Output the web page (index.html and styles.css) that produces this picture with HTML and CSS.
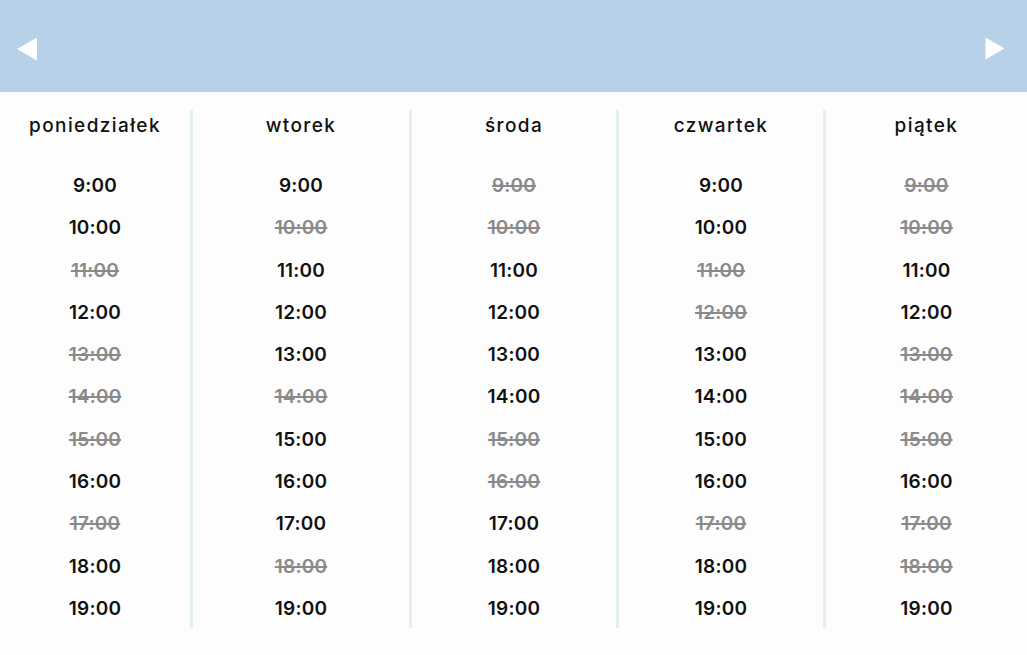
FILE: index.html
```html
<!DOCTYPE html>
<html lang="pl">
<head>
<meta charset="utf-8">
<link rel="stylesheet" href="styles.css">
</head>
<body>
<header class="bar">
  <button class="arrow" aria-label="poprzedni"><svg width="21" height="24" viewBox="0 0 21 24"><polygon points="0,12 20,0.5 20,23.5" fill="#fff"/></svg></button>
  <button class="arrow" aria-label="następny"><svg width="20" height="24" viewBox="0 0 20 24"><polygon points="0.5,0.5 19.5,11.5 0.5,22.5" fill="#fff"/></svg></button>
</header>
<main class="week">
  <section class="day">
    <h2 class="title">poniedziałek</h2>
    <ul class="slots">
      <li>9:00</li><li>10:00</li><li class="off">11:00</li><li>12:00</li><li class="off">13:00</li><li class="off">14:00</li><li class="off">15:00</li><li>16:00</li><li class="off">17:00</li><li>18:00</li><li>19:00</li>
    </ul>
  </section>
  <section class="day">
    <h2 class="title">wtorek</h2>
    <ul class="slots">
      <li>9:00</li><li class="off">10:00</li><li>11:00</li><li>12:00</li><li>13:00</li><li class="off">14:00</li><li>15:00</li><li>16:00</li><li>17:00</li><li class="off">18:00</li><li>19:00</li>
    </ul>
  </section>
  <section class="day">
    <h2 class="title">środa</h2>
    <ul class="slots">
      <li class="off">9:00</li><li class="off">10:00</li><li>11:00</li><li>12:00</li><li>13:00</li><li>14:00</li><li class="off">15:00</li><li class="off">16:00</li><li>17:00</li><li>18:00</li><li>19:00</li>
    </ul>
  </section>
  <section class="day">
    <h2 class="title">czwartek</h2>
    <ul class="slots">
      <li>9:00</li><li>10:00</li><li class="off">11:00</li><li class="off">12:00</li><li>13:00</li><li>14:00</li><li>15:00</li><li>16:00</li><li class="off">17:00</li><li>18:00</li><li>19:00</li>
    </ul>
  </section>
  <section class="day">
    <h2 class="title">piątek</h2>
    <ul class="slots">
      <li class="off">9:00</li><li class="off">10:00</li><li>11:00</li><li>12:00</li><li class="off">13:00</li><li class="off">14:00</li><li class="off">15:00</li><li>16:00</li><li class="off">17:00</li><li class="off">18:00</li><li>19:00</li>
    </ul>
  </section>
</main>
</body>
</html>
```
FILE: styles.css
```css
* { box-sizing: border-box; }
html, body {
  margin: 0;
  padding: 0;
  background: #fdfdfd;
  font-family: Inter, "Noto Sans", sans-serif;
  color: #111;
}
.bar {
  height: 92px;
  background: #b6d1e8;
  display: flex;
  justify-content: space-between;
  align-items: center;
  padding: 6px 22px 0 17px;
}
.arrow {
  border: 0;
  background: none;
  padding: 0;
  margin: 0;
  display: block;
  line-height: 0;
}
.week {
  display: grid;
  grid-template-columns: 190px 219px 207px 207px 204px;
  margin-top: 18px;
}
.day {
  display: flex;
  flex-direction: column;
  align-items: center;
  height: 518px;
}
.day + .day {
  border-left: 3px solid #e2eff3;
}
.title {
  margin: 0 0 24px;
  padding-top: 1px;
  font-size: 19px;
  font-weight: 500;
  line-height: 30px;
  letter-spacing: 1.4px;
}
.slots {
  list-style: none;
  margin: 0;
  padding: 0;
  text-align: center;
}
.slots li {
  height: 42.3px;
  line-height: 42.3px;
  font-size: 19px;
  font-weight: 600;
  letter-spacing: 0.2px;
}
.slots li.off {
  color: #8a8a8a;
  text-decoration: line-through;
  text-decoration-thickness: 2px;
}
```
